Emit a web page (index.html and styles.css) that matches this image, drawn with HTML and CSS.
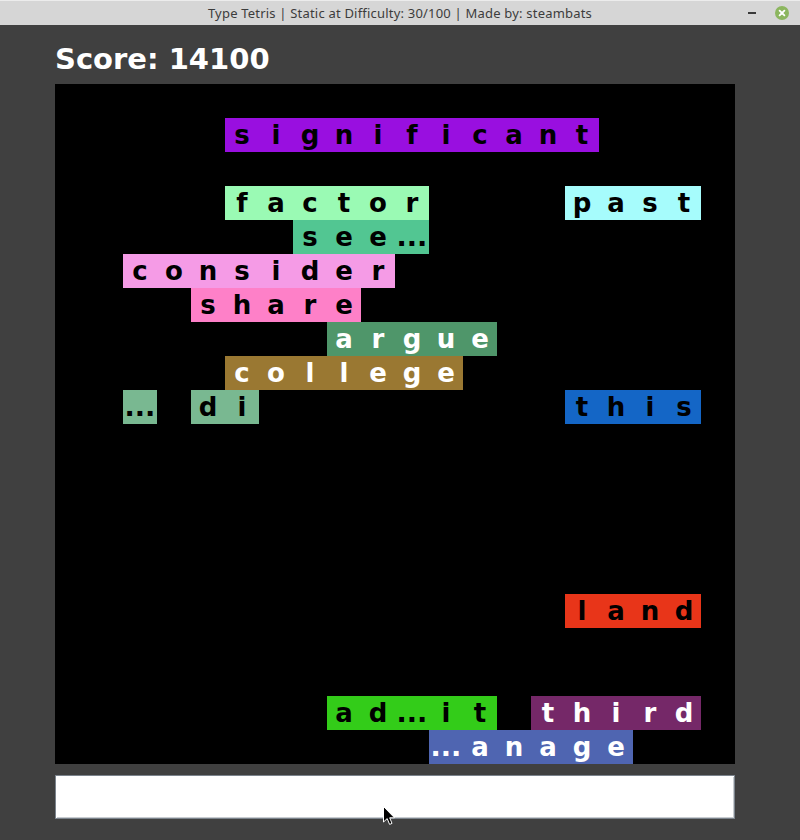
FILE: index.html
```html
<!DOCTYPE html>
<html>
<head>
<meta charset="utf-8">
<title>Type Tetris</title>
<link rel="stylesheet" href="styles.css">
</head>
<body>
<div class="window">
  <div class="titlebar">
    <span class="title">Type Tetris | Static at Difficulty: 30/100 | Made by: steambats</span>
    <div class="controls">
      <span class="minimize"></span>
      <span class="close">
        <svg width="14" height="14" viewBox="0 0 14 14"><circle cx="7" cy="7" r="7" fill="#8cb65f"/><path d="M4.6 4.6 L9.4 9.4 M9.4 4.6 L4.6 9.4" stroke="#fff" stroke-width="1.8" stroke-linecap="round"/></svg>
      </span>
    </div>
  </div>
  <div class="content">
    <div class="score">Score: 14100</div>
    <div class="board">
      <div class="block c-purple" style="grid-row:2;grid-column:6 / span 11"><span>s</span><span>i</span><span>g</span><span>n</span><span>i</span><span>f</span><span>i</span><span>c</span><span>a</span><span>n</span><span>t</span></div>
      <div class="block c-mint" style="grid-row:4;grid-column:6 / span 6"><span>f</span><span>a</span><span>c</span><span>t</span><span>o</span><span>r</span></div>
      <div class="block c-cyan" style="grid-row:4;grid-column:16 / span 4"><span>p</span><span>a</span><span>s</span><span>t</span></div>
      <div class="block c-teal" style="grid-row:5;grid-column:8 / span 4"><span>s</span><span>e</span><span>e</span><span class="dots">...</span></div>
      <div class="block c-pink" style="grid-row:6;grid-column:3 / span 8"><span>c</span><span>o</span><span>n</span><span>s</span><span>i</span><span>d</span><span>e</span><span>r</span></div>
      <div class="block c-rose" style="grid-row:7;grid-column:5 / span 5"><span>s</span><span>h</span><span>a</span><span>r</span><span>e</span></div>
      <div class="block c-green light" style="grid-row:8;grid-column:9 / span 5"><span>a</span><span>r</span><span>g</span><span>u</span><span>e</span></div>
      <div class="block c-brown light" style="grid-row:9;grid-column:6 / span 7"><span>c</span><span>o</span><span>l</span><span>l</span><span>e</span><span>g</span><span>e</span></div>
      <div class="block c-sage" style="grid-row:10;grid-column:3 / span 1"><span class="dots">...</span></div>
      <div class="block c-sage" style="grid-row:10;grid-column:5 / span 2"><span>d</span><span>i</span></div>
      <div class="block c-blue" style="grid-row:10;grid-column:16 / span 4"><span>t</span><span>h</span><span>i</span><span>s</span></div>
      <div class="block c-red" style="grid-row:16;grid-column:16 / span 4"><span>l</span><span>a</span><span>n</span><span>d</span></div>
      <div class="block c-lime" style="grid-row:19;grid-column:9 / span 5"><span>a</span><span>d</span><span class="dots">...</span><span>i</span><span>t</span></div>
      <div class="block c-plum light" style="grid-row:19;grid-column:15 / span 5"><span>t</span><span>h</span><span>i</span><span>r</span><span>d</span></div>
      <div class="block c-indigo light" style="grid-row:20;grid-column:12 / span 6"><span class="dots">...</span><span>a</span><span>n</span><span>a</span><span>g</span><span>e</span></div>
    </div>
    <div class="entry"></div>
  </div>
  <svg class="cursor" width="13" height="20" viewBox="0 0 13 20"><path d="M0.5 0.5 L0.5 16 L4.2 12.6 L6.6 18.4 L9 17.4 L6.7 11.8 L11.5 11.8 Z" fill="#000" stroke="#fff" stroke-width="1" stroke-linejoin="miter"/></svg>
</div>
</body>
</html>
```

FILE: styles.css
```css
html, body {
  margin: 0;
  padding: 0;
  background: #404040;
}
.window {
  position: relative;
  width: 800px;
  height: 840px;
  background: #404040;
}
.titlebar {
  height: 25px;
  background: #d6d6d6;
  border-top: 1px solid #ececec;
  box-sizing: border-box;
  display: flex;
  align-items: center;
  justify-content: center;
  position: relative;
}
.title {
  font-family: "Noto Sans", "DejaVu Sans", sans-serif;
  font-size: 13px;
  color: #3c3c3c;
  letter-spacing: 0.2px;
}
.controls {
  position: absolute;
  right: 11px;
  top: 5px;
  display: flex;
  align-items: center;
  gap: 19px;
}
.minimize {
  display: block;
  width: 8px;
  height: 2px;
  background: #3a3a3a;
}
.close {
  display: block;
  width: 14px;
  height: 14px;
}
.close svg { display: block; }
.content {
  padding: 18px 0 0 55px;
}
.score {
  font-family: "DejaVu Sans", sans-serif;
  font-weight: bold;
  font-size: 29px;
  line-height: 32px;
  color: #ffffff;
  margin-bottom: 9px;
}
.board {
  width: 680px;
  height: 680px;
  background: #000;
  display: grid;
  grid-template-columns: repeat(20, 34px);
  grid-template-rows: repeat(20, 34px);
}
.block {
  display: flex;
  font-family: "DejaVu Sans", sans-serif;
  font-weight: bold;
  font-size: 26px;
  line-height: 34px;
  color: #000;
}
.block span {
  width: 34px;
  text-align: center;
  flex: none;
  white-space: nowrap;
}
.block span.dots {
  font-size: 27px;
}
.block.light { color: #fff; }
.c-purple { background: #990fe0; }
.c-mint { background: #9afab4; }
.c-cyan { background: #a6fcfc; }
.c-teal { background: #52c692; }
.c-pink { background: #f59be6; }
.c-rose { background: #fe80c8; }
.c-green { background: #4f966a; }
.c-brown { background: #9a7832; }
.c-sage { background: #79b891; }
.c-blue { background: #1466c6; }
.c-red { background: #e83519; }
.c-lime { background: #33cc19; }
.c-plum { background: #752868; }
.c-indigo { background: #4f65b1; }
.entry {
  margin-top: 11px;
  width: 680px;
  height: 44px;
  box-sizing: border-box;
  background: #fff;
  border: 1px solid #7b838c;
  box-shadow: inset 1px 1px 0 #ffffff, inset -1px -1px 0 #c8ccd0;
}
.cursor {
  position: absolute;
  left: 383px;
  top: 806px;
}
```
